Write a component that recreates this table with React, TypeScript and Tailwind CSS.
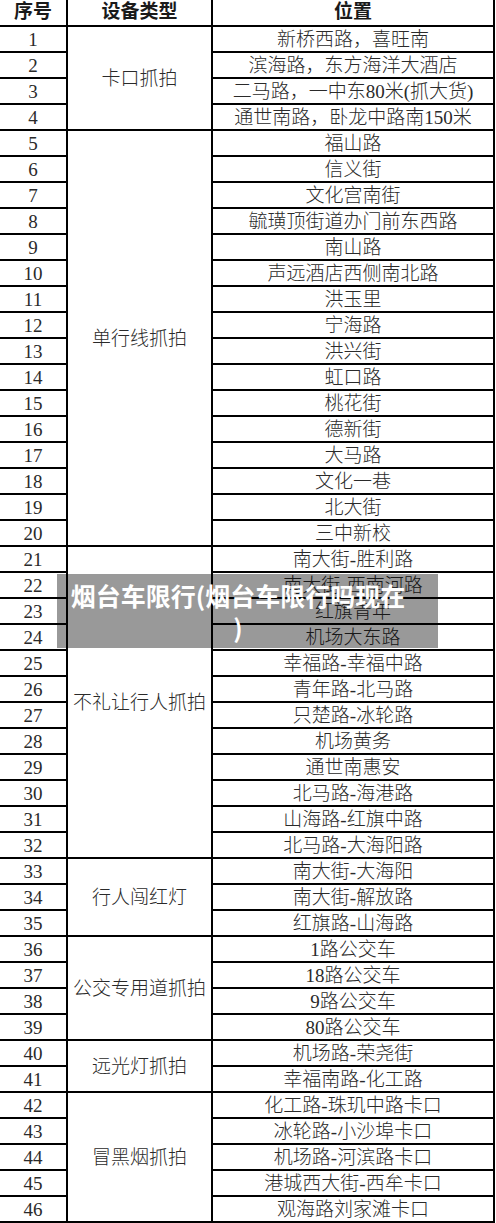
import React from 'react';

const rows = [
  '新桥西路，喜旺南',
  '滨海路，东方海洋大酒店',
  '二马路，一中东80米(抓大货)',
  '通世南路，卧龙中路南150米',
  '福山路',
  '信义街',
  '文化宫南街',
  '毓璜顶街道办门前东西路',
  '南山路',
  '声远酒店西侧南北路',
  '洪玉里',
  '宁海路',
  '洪兴街',
  '虹口路',
  '桃花街',
  '德新街',
  '大马路',
  '文化一巷',
  '北大街',
  '三中新校',
  '南大街-胜利路',
  '南大街-西南河路',
  '红旗青年',
  '机场大东路',
  '幸福路-幸福中路',
  '青年路-北马路',
  '只楚路-冰轮路',
  '机场黄务',
  '通世南惠安',
  '北马路-海港路',
  '山海路-红旗中路',
  '北马路-大海阳路',
  '南大街-大海阳',
  '南大街-解放路',
  '红旗路-山海路',
  '1路公交车',
  '18路公交车',
  '9路公交车',
  '80路公交车',
  '机场路-荣尧街',
  '幸福南路-化工路',
  '化工路-珠玑中路卡口',
  '冰轮路-小沙埠卡口',
  '机场路-河滨路卡口',
  '港城西大街-西牟卡口',
  '观海路刘家滩卡口',
];

// first row index (1-based) -> [label, span class]
const groups: Record<number, [string, string]> = {
  1: ['卡口抓拍', 'row-span-4'],
  5: ['单行线抓拍', 'row-span-16'],
  21: ['不礼让行人抓拍', 'row-span-12'],
  33: ['行人闯红灯', 'row-span-3'],
  36: ['公交专用道抓拍', 'row-span-4'],
  40: ['远光灯抓拍', 'row-span-2'],
  42: ['冒黑烟抓拍', 'row-span-5'],
};

const font = "font-['Liberation_Serif','Noto_Sans_CJK_SC',serif]";
const base = `bg-white flex items-center justify-center text-[19px] whitespace-nowrap ${font}`;
const cell = `${base} pt-[2px] font-light text-[#2a2a2a]`;
const head = `${base} font-bold text-[#1a1a1a]`;

export default function App() {
  return (
    <div className="relative w-[496px] h-[1223px] bg-white overflow-hidden">
      <div className="w-[495px] grid grid-cols-[66px_143px_280px] grid-rows-[25px_repeat(46,24px)] gap-[2px] pr-[2px] pb-[2px] bg-black">
        <div className={`${head} col-start-1`}>序号</div>
        <div className={`${head} col-start-2`}>设备类型</div>
        <div className={`${head} col-start-3`}>位置</div>
        {rows.map((loc, i) => {
          const n = i + 1;
          const g = groups[n];
          return (
            <React.Fragment key={n}>
              <div className={`${cell} col-start-1`}>{n}</div>
              {g && <div className={`${cell} col-start-2 ${g[1]}`}>{g[0]}</div>}
              <div className={`${cell} col-start-3`}>{loc}</div>
            </React.Fragment>
          );
        })}
      </div>

      <div className="absolute left-[57px] top-[574px] w-[381px] h-[74px] bg-black/40 pl-[11px] pt-[5px]">
        <div className="w-[340px] text-center text-white text-[25px] leading-[32px] font-bold font-['Noto_Sans_CJK_SC','Noto_Sans',sans-serif] whitespace-nowrap">
          烟台车限行(烟台车限行吗现在
          <br />)
        </div>
      </div>
    </div>
  );
}
